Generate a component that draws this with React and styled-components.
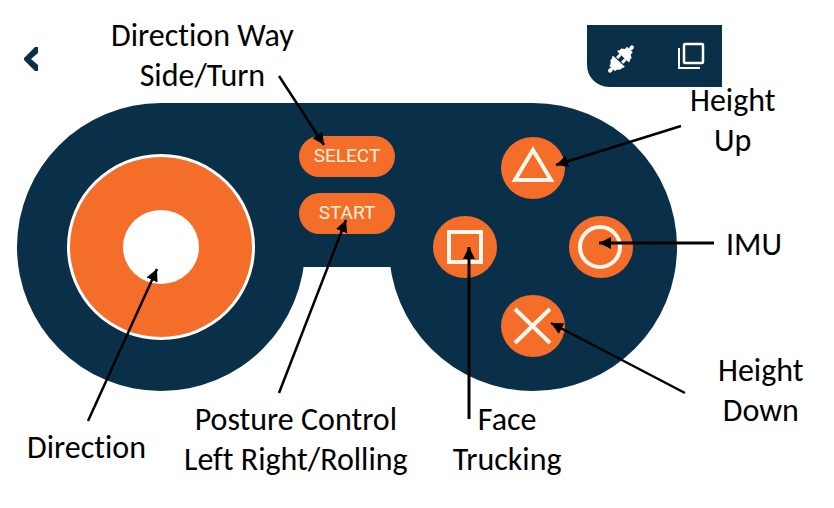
import React from "react";
import styled, { createGlobalStyle } from "styled-components";

const navy = "#0a3049";
const orange = "#f46d29";
const cream = "#fff8ee";

const GlobalStyle = createGlobalStyle`
  * { box-sizing: border-box; }
  body { margin: 0; background: #fff; }
  button { border: 0; padding: 0; cursor: pointer; }
`;

const Page = styled.main`
  position: relative;
  display: grid;
  grid-template-columns: 677fr 157fr;
  grid-template-rows: 103px auto auto;
  min-height: 100vh;
  align-content: start;
  color: #000;
  font-family: Carlito, Calibri, Lato, sans-serif;
  font-size: 32px;
  font-variant-ligatures: none;
  line-height: 40px;
`;

const Header = styled.header`
  grid-column: 1 / -1;
  grid-row: 1;
  display: flex;
  align-items: flex-start;
  padding: 16px 112px 0 16px;
`;

const BackButton = styled.button`
  display: grid;
  place-items: center;
  width: 32px;
  height: 32px;
  margin-top: 27px;
  background: transparent;
`;

const Label = styled.p`
  margin: 0 0 0 ${({ $indent = 0 }) => $indent}px;
  text-align: center;
  white-space: nowrap;
`;

const Toolbar = styled.nav`
  display: flex;
  align-items: center;
  justify-content: space-between;
  width: 135px;
  height: 62px;
  margin: 9px 0 0 auto;
  padding: 0 16px;
  background: ${navy};
  border-bottom-left-radius: 22px;
`;

const ToolButton = styled.button`
  display: grid;
  place-items: center;
  background: transparent;
`;

const Controller = styled.section`
  grid-column: 1;
  grid-row: 2;
  display: flex;
  justify-content: space-between;
  margin-left: 17px;
  background: linear-gradient(${navy}, ${navy}) 144px 0 / calc(100% - 288px) 164px no-repeat;
`;

const Lobe = styled.div`
  display: grid;
  place-items: center;
  flex: none;
  width: 288px;
  height: 288px;
  border-radius: 50%;
  background: ${navy};
`;

const Joystick = styled.button`
  display: grid;
  place-items: center;
  width: 188px;
  height: 186px;
  border: 3px solid #fff;
  border-radius: 50%;
  background: ${orange};
`;

const Knob = styled.span`
  width: 76px;
  height: 74px;
  border-radius: 50%;
  background: #fff;
`;

const MenuButtons = styled.div`
  display: flex;
  flex-direction: column;
  align-items: center;
  gap: 16px;
  z-index: 1;
  width: 84px;
  padding-top: 33px;
`;

const PillButton = styled.button`
  flex: none;
  width: 96px;
  height: 41px;
  padding-bottom: 2px;
  border-radius: 21px;
  background: ${orange};
  color: #fff1dc;
  font: 400 19px/24px Roboto, sans-serif;
`;

const ButtonPad = styled.div`
  display: grid;
  grid-template-columns: repeat(3, 64px);
  grid-template-rows: repeat(3, 62px);
  gap: 17px 4px;
`;

const places = { top: "1 / 2", left: "2 / 1", right: "2 / 3", bottom: "3 / 2" };

const PadButton = styled.button`
  grid-area: ${({ $place }) => places[$place]};
  border-radius: 50%;
  background: ${orange};
`;

const Glyph = styled.svg`
  display: block;
  fill: none;
  stroke: ${({ $color = cream }) => $color};
  stroke-width: ${({ $weight = 4 }) => $weight};
`;

const Solid = styled.svg`
  display: block;
  fill: ${({ $color = "#fff" }) => $color};
`;

const BottomLabels = styled.div`
  grid-column: 1;
  grid-row: 3;
  display: flex;
  align-items: flex-end;
  padding: 9px 0 0 27px;
`;

const DirectionLabel = styled(Label)`
  padding-bottom: 12px;
`;

const SideLabels = styled.aside`
  grid-column: 2;
  grid-row: 1 / -1;
  display: flex;
  flex-direction: column;
  align-items: flex-start;
  padding-top: 81px;
`;

const ImuLabel = styled(Label)`
  padding: 64px 0 86px;
`;

const Arrows = styled.svg`
  position: absolute;
  inset: 0;
  z-index: 2;
  width: 100%;
  height: 100%;
  pointer-events: none;
  stroke: #000;
`;

const arrows = [
  { from: [279, 76], to: [324, 145], weight: 2.5 },
  { from: [279, 393], to: [346, 220], weight: 2.5 },
  { from: [88, 421], to: [157, 269], weight: 2.5 },
  { from: [681, 126], to: [556, 165], weight: 2.5 },
  { from: [714, 243], to: [599, 243], weight: 3 },
  { from: [469, 419], to: [469, 247], weight: 3 },
  { from: [685, 393], to: [551, 323], weight: 2.5 },
];

const across = (x) => `${(x / 834) * 100}%`;

const shapes = {
  top: <path d="M32 13 50 43H14Z" />,
  left: <rect x="16" y="16" width="32" height="30" />,
  right: <circle cx="31" cy="31" r="20" />,
  bottom: <path d="m14 14 35 34M49 14 14 48" />,
};

const padButtons = [
  ["top", "Height up"],
  ["left", "Face tracking"],
  ["right", "IMU"],
  ["bottom", "Height down"],
];

export default function App() {
  return (
    <>
      <GlobalStyle />
      <Page>
        <Header>
          <BackButton aria-label="Back">
            <Solid width="32" height="32" $color={navy}>
              <path d="M19 4h3v6l-7 6 7 6v6h-3L8 17v-2Z" />
            </Solid>
          </BackButton>
          <Label $indent={63}>
            Direction Way
            <br />
            Side/Turn
          </Label>
          <Toolbar aria-label="Tools">
            <ToolButton aria-label="Connect">
              <Solid width="36" height="36">
                <g transform="translate(18 21) rotate(43)">
                  <rect x="-2" y="-18" width="4" height="5" rx="2" />
                  <rect x="-1" y="-15" width="2" height="4" />
                  <path d="M-4-13h8v3l3 2v5H-7v-5l3-2Z" />
                  <rect x="-8" y="-5" width="16" height="2" />
                  <rect x="-5" y="-3" width="3" height="5" />
                  <rect x="2" y="-3" width="3" height="5" />
                  <rect x="-8" y="3" width="16" height="2" />
                  <path d="M-7 4H7v4l-3 3v2h-8v-2l-3-3Z" />
                  <rect x="-1" y="12" width="2" height="3" />
                  <rect x="-2" y="13" width="4" height="5" rx="2" />
                </g>
              </Solid>
            </ToolButton>
            <ToolButton aria-label="Windows">
              <Glyph width="30" height="30" $color="#fff" $weight={2.5}>
                <rect x="8" y="3" width="19" height="19" rx="1" />
                <path d="M3 7v20h21" strokeWidth="2" />
              </Glyph>
            </ToolButton>
          </Toolbar>
        </Header>

        <Controller aria-label="Game controller">
          <Lobe>
            <Joystick aria-label="Direction">
              <Knob />
            </Joystick>
          </Lobe>
          <MenuButtons>
            <PillButton>SELECT</PillButton>
            <PillButton>START</PillButton>
          </MenuButtons>
          <Lobe>
            <ButtonPad>
              {padButtons.map(([place, name]) => (
                <PadButton key={place} $place={place} aria-label={name}>
                  <Glyph width="64" height="62">{shapes[place]}</Glyph>
                </PadButton>
              ))}
            </ButtonPad>
          </Lobe>
        </Controller>

        <BottomLabels>
          <DirectionLabel>Direction</DirectionLabel>
          <Label $indent={38}>
            Posture Control
            <br />
            Left Right/Rolling
          </Label>
          <Label $indent={45}>
            Face
            <br />
            Trucking
          </Label>
        </BottomLabels>

        <SideLabels>
          <Label $indent={13}>
            Height
            <br />
            Up
          </Label>
          <ImuLabel $indent={49}>IMU</ImuLabel>
          <Label $indent={41}>
            Height
            <br />
            Down
          </Label>
        </SideLabels>

        <Arrows aria-hidden="true">
          <defs>
            <marker
              id="head"
              viewBox="0 0 12 12"
              refX="12"
              refY="6"
              markerWidth="12"
              markerHeight="12"
              markerUnits="userSpaceOnUse"
              orient="auto"
            >
              <path d="M0 0 12 6 0 12Z" stroke="none" />
            </marker>
          </defs>
          {arrows.map(({ from, to, weight }) => (
            <line
              key={`${from}-${to}`}
              x1={across(from[0])}
              y1={from[1]}
              x2={across(to[0])}
              y2={to[1]}
              strokeWidth={weight}
              markerEnd="url(#head)"
            />
          ))}
        </Arrows>
      </Page>
    </>
  );
}
